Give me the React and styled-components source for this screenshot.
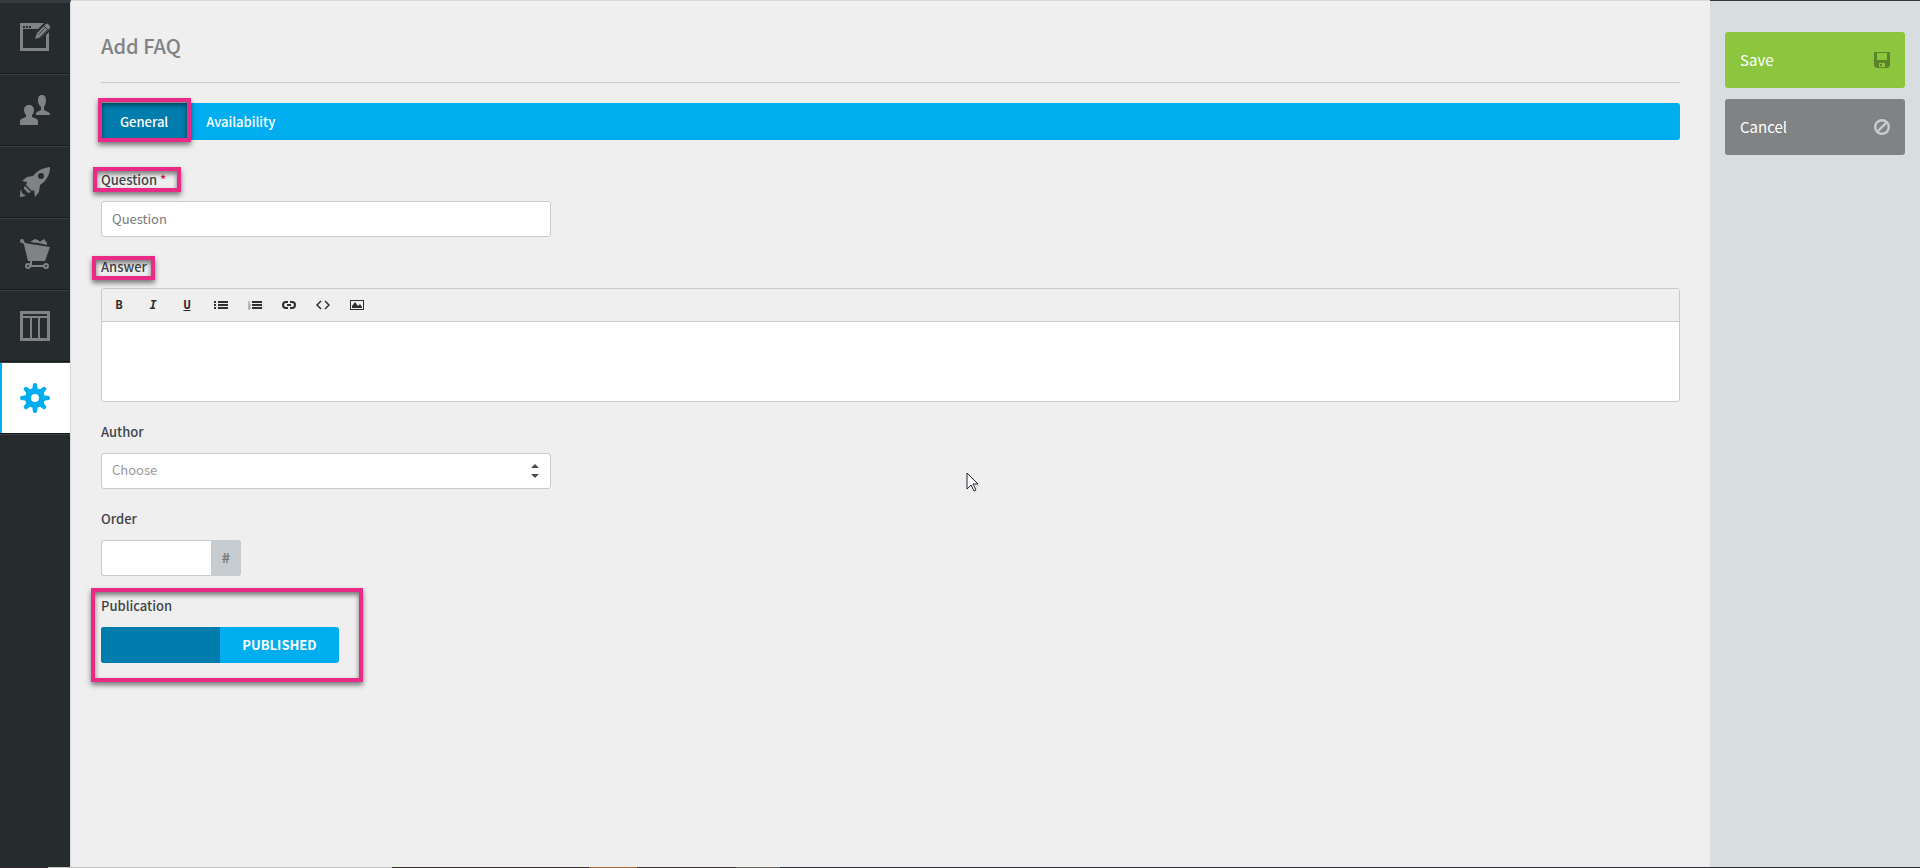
import React from 'react';
import styled, { createGlobalStyle, css } from 'styled-components';

const GlobalStyle = createGlobalStyle`
  * {
    box-sizing: border-box;
  }
  body {
    margin: 0;
    background: #efefef;
    color: #414449;
    font-family: "Noto Sans CJK SC", "Open Sans", sans-serif;
    font-size: 14px;
    line-height: 22px;
  }
  button, input, select {
    font: inherit;
    color: inherit;
    margin: 0;
  }
`;

const Page = styled.div`
  display: flex;
  min-height: 100vh;
  position: relative;
`;

// dark navigation on the left, one square link per section
const Sidebar = styled.nav`
  flex: 0 0 71px;
  background: #262b2d;
  border-top: 3px solid #373b3f;
  border-right: 1px solid #d5d9d9;
`;

const NavLink = styled.a`
  display: flex;
  align-items: center;
  justify-content: center;
  height: 72px;
  color: #808284;
  border-top: 1px solid #3a3f42;
  border-bottom: 1px solid #171a1c;

  &:first-child {
    height: 71px;
    border-top: none;
  }
  svg {
    display: block;
    width: 30px;
    height: 30px;
  }
  ${props => props.$active && css`
    background: #fff;
    color: #00adef;
    box-shadow: inset 2px 0 0 #00adef, 0 1px 0 #3a3f42;
  `}
`;

const Main = styled.main`
  flex: 1;
  min-width: 0;
  padding: 29px 30px 0;
  border-top: 1px solid #d5d9d9;
`;

const Title = styled.h1`
  margin: 0 0 20px;
  padding-bottom: 20px;
  border-bottom: 1px solid #c6cccd;
  font-size: 20px;
  line-height: 32px;
  font-weight: 500;
  color: #808284;
`;

const Tabs = styled.div`
  display: flex;
  background: #00adef;
  border-radius: 3px;
`;

const Tab = styled.button`
  position: relative;
  height: 37px;
  padding: 0 19px;
  border: none;
  border-radius: ${props => (props.$active ? '3px 0 0 3px' : '0')};
  background: ${props => (props.$active ? '#007dad' : 'transparent')};
  font-size: 13px;
  font-weight: 500;
  color: #fff;
`;

const Form = styled.form`
  display: flex;
  flex-direction: column;
  align-items: flex-start;
  gap: 19px;
  margin-top: 29px;
`;

const Field = styled.div`
  position: relative;
  display: flex;
  flex-direction: column;
  align-items: flex-start;
  gap: 10px;
  width: ${props => (props.$wide ? '100%' : 'auto')};
`;

const Label = styled.label`
  position: relative;
  font-size: 13px;
  font-weight: 500;
`;

const Required = styled.span`
  color: #e0193a;
`;

// pink frame drawn over the parts worth a look
const Highlight = styled.span`
  position: absolute;
  inset: ${props => props.$inset};
  border: 4px solid #e92a86;
  box-shadow: 0 3px 5px rgba(0, 0, 0, 0.5), inset 0 3px 5px rgba(0, 0, 0, 0.5);
  pointer-events: none;
  z-index: 1;
`;

const control = css`
  height: 36px;
  padding: 0 10px 2px;
  border: 1px solid #c6cccd;
  border-radius: 3px;
  background: #fff;
  font-size: 13px;
`;

const TextInput = styled.input`
  ${control}
  width: 450px;

  &::placeholder {
    color: #77797b;
    opacity: 1;
  }
`;

const SelectWrap = styled.div`
  position: relative;
  display: flex;

  svg {
    position: absolute;
    right: 12px;
    top: 11px;
    width: 8px;
    height: 14px;
    pointer-events: none;
  }
`;

const Select = styled.select`
  ${control}
  width: 450px;
  appearance: none;
  color: #97999b;
`;

const InputGroup = styled.div`
  display: flex;
`;

const OrderInput = styled.input`
  ${control}
  width: 110px;
  border-right: none;
  border-radius: 3px 0 0 3px;
`;

const Addon = styled.span`
  display: flex;
  align-items: center;
  justify-content: center;
  width: 30px;
  padding-bottom: 2px;
  background: #c6cccf;
  border-radius: 0 3px 3px 0;
  color: #77797b;
  font-size: 14px;
  font-weight: 700;
`;

const Editor = styled.div`
  width: 100%;
  border: 1px solid #c6cccd;
  border-radius: 3px;
  background: #fff;
`;

const Toolbar = styled.div`
  display: flex;
  height: 33px;
  border-bottom: 1px solid #c6cccd;
  border-radius: 3px 3px 0 0;
  background: #efefef;
`;

const Tool = styled.button`
  width: 34px;
  padding: 0;
  border: none;
  background: none;
  color: #2e3032;
  font-family: "DejaVu Sans Mono", monospace;
  font-size: 12px;
  font-weight: 700;

  svg {
    display: block;
    margin: 0 auto;
    width: 14px;
    height: 14px;
  }
`;

const EditArea = styled.div`
  height: 79px;
  padding: 10px;
  outline: none;
`;

const Switch = styled.button`
  display: grid;
  grid-template-columns: 1fr 1fr;
  align-items: center;
  width: 238px;
  height: 36px;
  padding: 0;
  border: none;
  border-radius: 3px;
  overflow: hidden;
  background: #00adef;
  color: #fff;
  font-size: 13px;
  font-weight: 700;

  &::before {
    content: '';
    height: 100%;
    background: #007dad;
  }
`;

const Actions = styled.aside`
  flex: 0 0 210px;
  display: flex;
  flex-direction: column;
  gap: 11px;
  padding: 31px 15px;
  border-top: 1px solid #34353d;
  background: #d8dddf;
`;

const Action = styled.button`
  display: flex;
  align-items: center;
  justify-content: space-between;
  height: 56px;
  padding: 0 15px;
  border: none;
  border-radius: 3px;
  background: ${props => props.$color};
  color: #fff;
  font-size: 15px;

  svg {
    width: 16px;
    height: 16px;
  }
`;

// thin strip along the lower edge of the window
const BottomEdge = styled.div`
  position: absolute;
  inset: auto 0 0 0;
  height: 1px;
  background: linear-gradient(
    to right,
    #33282a 0 48px, #c2c2c2 48px 392px, #3b2f2c 392px 589px,
    #a0683c 589px 637px, #3b3230 637px 736px, #6b655c 736px 780px, #2e2f33 780px
  );
`;

const Pointer = styled.svg`
  position: absolute;
  left: 966px;
  top: 472px;
  width: 13px;
  height: 20px;
`;

const navIcons = {
  content: (
    <>
      <path fillRule="evenodd" d="M0 0h24l-6 6H3v19h23V12l3-3v19H0zM3 3v2h2V3zm3 0v2h2V3zm3 0v2h2V3z" />
      <path d="M15 16l2-6 8-8 4 4-8 8zM26 1q1-1 2 0l2 2q1 1 0 2l-1 1-4-4z" />
      <path d="M18 12l8-8M20 14l8-8M24 3l4 4" stroke="#262b2d" strokeWidth="0.7" />
    </>
  ),
  users: (
    <>
      <path d="M16 20v-2l1-1 4-2v-3c-2-2-3-4-3-6 0-4 1-6 4-6s4 2 4 6c0 2-1 4-2 6v3l4 2c2 1 2 2 2 3z" />
      <path
        d="M0 30v-4l1-2 5-2v-2c-1-1-2-3-2-5 0-3 2-5 5-5s5 2 5 5c0 2-1 4-2 5v2l5 2 1 2v4z"
        stroke="#262b2d"
        strokeWidth="1"
        paintOrder="stroke"
      />
    </>
  ),
  rocket: (
    <>
      <path fillRule="evenodd" d="M30 0c0 8-4 14-10 18l-1 7-4 5-1-7-2 1-6-6 1-3-5-1 5-4 6-1C17 4 22 1 30 0zM21 6a3 3 0 1 0 0 6 3 3 0 0 0 0-6z" />
      <path d="M5 19l6 6c-3 2-5 0-5-2-2 0-3-2-1-4zM1 22c0 3 2 6 5 6-1 1-4 2-6 2 0-3 0-6 1-8z" />
    </>
  ),
  cart: (
    <>
      <path d="M4 4l26 4-5 14H8z" />
      <path d="M10 3l5-3 3 1 2 2-3 1zM18 4l6-4 3 4v2z" />
      <circle cx="2" cy="2" r="2" />
      <path d="M2 2l3 3 4 16M11 20v6M8 27h17" fill="none" stroke="currentColor" strokeWidth="2" />
      <circle cx="8" cy="27" r="2" fill="#262b2d" stroke="currentColor" strokeWidth="2" />
      <circle cx="26" cy="27" r="2" fill="#262b2d" stroke="currentColor" strokeWidth="2" />
    </>
  ),
  table: (
    <path fillRule="evenodd" d="M0 0h30v30H0zM3 3v2h24V3zM3 7v20h7V7zM12 7v20h6V7zM20 7v20h7V7z" />
  ),
  gear: (
    <>
      <circle cx="15" cy="15" r="7" fill="none" stroke="currentColor" strokeWidth="6" />
      {[0, 45, 90, 135, 180, 225, 270, 315].map(angle => (
        <path key={angle} d="M12 8l1-7q2-2 4 0l1 7z" transform={`rotate(${angle} 15 15)`} />
      ))}
    </>
  ),
};

const NavIcon = ({ name }) => (
  <svg viewBox="0 0 30 30" fill="currentColor" aria-hidden="true">{navIcons[name]}</svg>
);

const ToolIcon = ({ children }) => (
  <svg viewBox="0 0 14 14" fill="currentColor" aria-hidden="true">{children}</svg>
);

const tools = [
  { name: 'Bold', icon: 'B' },
  { name: 'Italic', icon: <em>I</em> },
  { name: 'Underline', icon: <u>U</u> },
  {
    name: 'Bulleted list',
    icon: <ToolIcon><path d="M0 3h2v2H0zM4 3h10v2H4zM0 6h2v2H0zM4 6h10v2H4zM0 9h2v2H0zM4 9h10v2H4z" /></ToolIcon>,
  },
  {
    name: 'Numbered list',
    icon: (
      <ToolIcon>
        <path d="M4 3h10v2H4zM4 6h10v2H4zM4 9h10v2H4z" />
        <path d="M1 3v2M0 6h2v2H0M0 9h2v2H0" fill="none" stroke="#8c8e90" />
      </ToolIcon>
    ),
  },
  {
    name: 'Link',
    icon: (
      <ToolIcon>
        <path d="M6 4H4a3 3 0 0 0 0 6h2M8 4h2a3 3 0 0 1 0 6H8M5 7h4" fill="none" stroke="currentColor" strokeWidth="2" />
      </ToolIcon>
    ),
  },
  {
    name: 'Code',
    icon: <ToolIcon><path d="M5 3L1 7l4 4M9 3l4 4-4 4" fill="none" stroke="currentColor" strokeWidth="1.5" /></ToolIcon>,
  },
  {
    name: 'Image',
    icon: (
      <ToolIcon>
        <path fillRule="evenodd" d="M0 2h14v10H0zM1 3v8h12V3z" />
        <path d="M2 10V8l3-4 3 4 2-2 2 3v1z" />
      </ToolIcon>
    ),
  },
];

const sections = [
  { name: 'content', title: 'Content' },
  { name: 'users', title: 'Users' },
  { name: 'rocket', title: 'Marketing' },
  { name: 'cart', title: 'Shop' },
  { name: 'table', title: 'Reports' },
  { name: 'gear', title: 'Settings' },
];

const App = () => {
  const [tab, setTab] = React.useState('General');

  return (
    <Page>
      <GlobalStyle />
      <Sidebar>
        {sections.map(({ name, title }) => (
          <NavLink key={name} href={`#${name}`} aria-label={title} $active={name === 'gear'}>
            <NavIcon name={name} />
          </NavLink>
        ))}
      </Sidebar>

      <Main>
        <Title>Add FAQ</Title>
        <Tabs role="tablist">
          {['General', 'Availability'].map(name => (
            <Tab
              key={name}
              role="tab"
              aria-selected={tab === name}
              $active={tab === name}
              onClick={() => setTab(name)}
            >
              {name}
              {name === 'General' && <Highlight $inset="-5px -4px -2px -3px" />}
            </Tab>
          ))}
        </Tabs>

        <Form>
          <Field>
            <Label htmlFor="question">
              Question <Required>*</Required>
              <Highlight $inset="-2px -15px -1px -8px" />
            </Label>
            <TextInput id="question" placeholder="Question" />
          </Field>

          <Field $wide>
            <Label id="answer-label">
              Answer
              <Highlight $inset="0 -8px -2px -9px" />
            </Label>
            <Editor>
              <Toolbar>
                {tools.map(({ name, icon }) => (
                  <Tool key={name} type="button" aria-label={name}>{icon}</Tool>
                ))}
              </Toolbar>
              <EditArea contentEditable role="textbox" aria-labelledby="answer-label" />
            </Editor>
          </Field>

          <Field>
            <Label htmlFor="author">Author</Label>
            <SelectWrap>
              <Select id="author" defaultValue="">
                <option value="">Choose</option>
              </Select>
              <svg viewBox="0 0 8 14" fill="#4a4c4e" aria-hidden="true">
                <path d="M0 4l4-4 4 4zM0 10l4 4 4-4z" />
              </svg>
            </SelectWrap>
          </Field>

          <Field>
            <Label htmlFor="order">Order</Label>
            <InputGroup>
              <OrderInput id="order" />
              <Addon>#</Addon>
            </InputGroup>
          </Field>

          <Field>
            <Label htmlFor="publication">Publication</Label>
            <Switch id="publication" type="button" role="switch" aria-checked="true">PUBLISHED</Switch>
            <Highlight $inset="-7px -24px -19px -10px" />
          </Field>
        </Form>
      </Main>

      <Actions>
        <Action type="button" $color="#8cc63f">
          Save
          <svg viewBox="0 0 16 16" fill="#5d842a" aria-hidden="true">
            <path fillRule="evenodd" d="M0 0h16v14l-2 2H2l-2-2zM3 1v7h10V1zM5 11v4h6v-4zM6 12h2v2H6z" />
          </svg>
        </Action>
        <Action type="button" $color="#808284">
          Cancel
          <svg viewBox="0 0 16 16" fill="none" stroke="#c9cccd" strokeWidth="2.4" aria-hidden="true">
            <circle cx="8" cy="8" r="6.800" />
            <path d="M3 13L13 3" />
          </svg>
        </Action>
      </Actions>

      <Pointer viewBox="0 0 13 20" aria-hidden="true">
        <path d="M1 1v16l4-4 3 6 2-1-3-6h5z" fill="#fff" stroke="#23252f" />
      </Pointer>
      <BottomEdge />
    </Page>
  );
};

export default App;
